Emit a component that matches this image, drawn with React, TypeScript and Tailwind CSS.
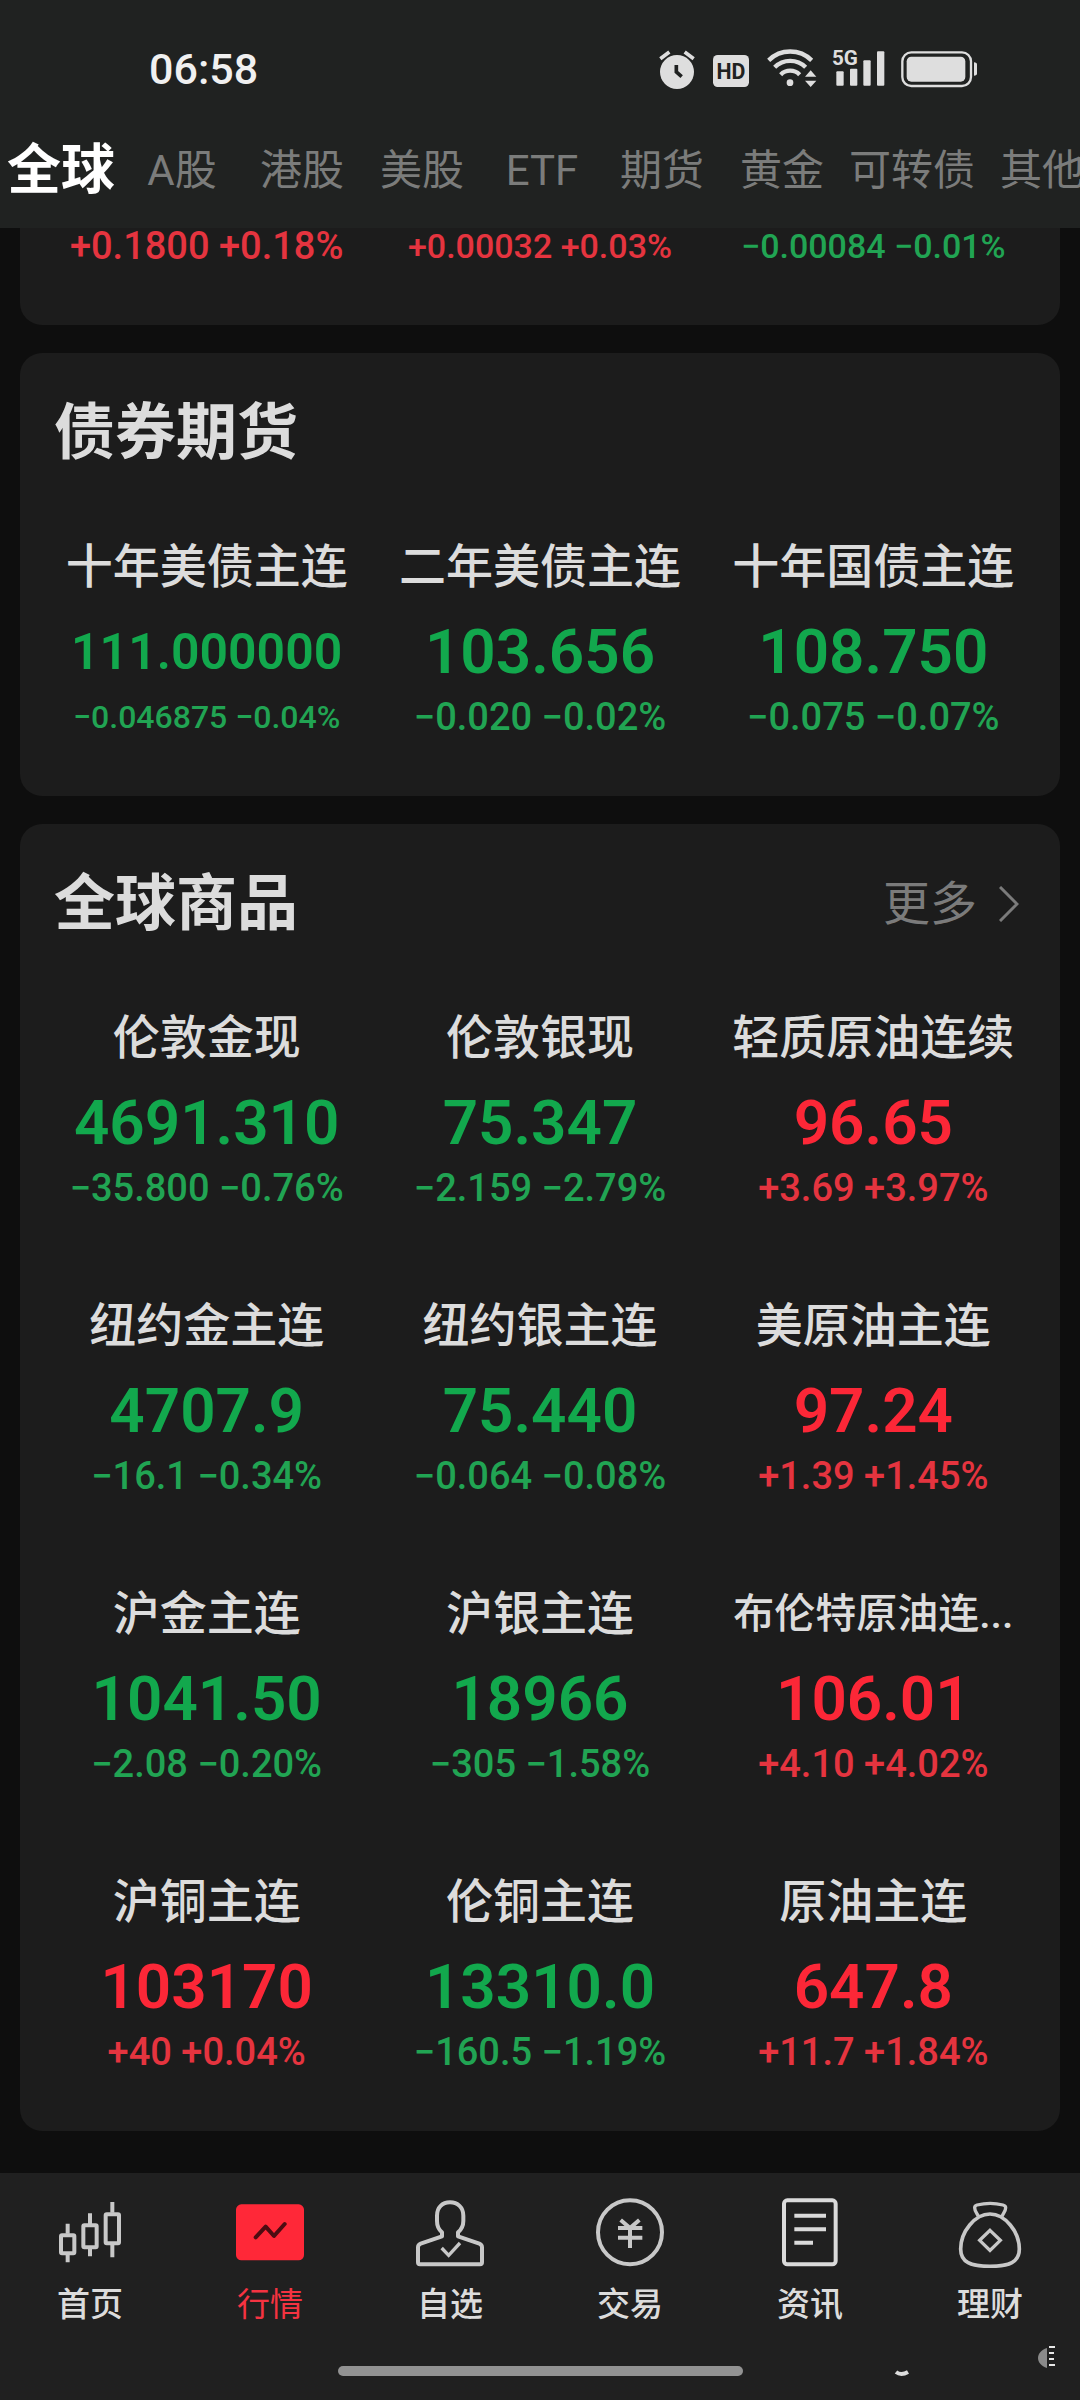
import type { ReactNode } from "react";

type Quote = {
  name: string;
  price: string;
  change: string;
  up?: boolean;
  nameSize?: string;
  priceSize?: string;
  changeSize?: string;
};

const tabs = ["全球", "A股", "港股", "美股", "ETF", "期货", "黄金", "可转债", "其他"];

const forex = [
  { change: "+0.1800 +0.18%", className: "text-[38px] text-[#e5343f]" },
  { change: "+0.00032 +0.03%", className: "text-[34px] text-[#e5343f]" },
  { change: "−0.00084 −0.01%", className: "text-[34px] text-[#21a453]" },
];

const bonds: Quote[] = [
  { name: "十年美债主连", price: "111.000000", change: "−0.046875 −0.04%", priceSize: "text-[50px]", changeSize: "text-[32px]" },
  { name: "二年美债主连", price: "103.656", change: "−0.020 −0.02%" },
  { name: "十年国债主连", price: "108.750", change: "−0.075 −0.07%" },
];

const commodities: Quote[] = [
  { name: "伦敦金现", price: "4691.310", change: "−35.800 −0.76%" },
  { name: "伦敦银现", price: "75.347", change: "−2.159 −2.79%" },
  { name: "轻质原油连续", price: "96.65", change: "+3.69 +3.97%", up: true },
  { name: "纽约金主连", price: "4707.9", change: "−16.1 −0.34%" },
  { name: "纽约银主连", price: "75.440", change: "−0.064 −0.08%" },
  { name: "美原油主连", price: "97.24", change: "+1.39 +1.45%", up: true },
  { name: "沪金主连", price: "1041.50", change: "−2.08 −0.20%" },
  { name: "沪银主连", price: "18966", change: "−305 −1.58%" },
  { name: "布伦特原油连...", price: "106.01", change: "+4.10 +4.02%", up: true, nameSize: "text-[41px]" },
  { name: "沪铜主连", price: "103170", change: "+40 +0.04%", up: true },
  { name: "伦铜主连", price: "13310.0", change: "−160.5 −1.19%" },
  { name: "原油主连", price: "647.8", change: "+11.7 +1.84%", up: true },
];

function StatusIcons() {
  return (
    <div className="flex items-center text-[#dedede]" aria-hidden="true">
      <svg className="mr-[18px] h-10 w-9" viewBox="117 57 108 120" fill="none">
        <circle cx="171" cy="126" r="51" fill="currentColor" />
        <path d="M121 86 148 66M221 86 194 66" stroke="currentColor" strokeWidth="11" />
        <path d="M169 105v21l16 14" stroke="#202221" strokeWidth="11" />
      </svg>
      <svg className="mr-[18px] h-10 w-9" viewBox="279 57 108 120">
        <rect x="279" y="75" width="108" height="96" rx="14" fill="currentColor" />
        <text x="333" y="147" textAnchor="middle" fontFamily="Roboto, sans-serif" fontWeight="700" fontSize="64" fill="#202221">HD</text>
      </svg>
      <svg className="mr-[15px] h-10 w-[50px]" viewBox="441 57 150 120" fill="none">
        <g stroke="currentColor" strokeWidth="13">
          <path d="M446 91a92 92 0 0 1 129 0" />
          <path d="M464 112a66 66 0 0 1 93 0" />
          <path d="M482 134a40 40 0 0 1 57 0" />
        </g>
        <circle cx="510" cy="158" r="10" fill="currentColor" />
        <path d="M555 140h34l-17-19zM555 152h34l-17 19z" fill="currentColor" />
      </svg>
      <svg className="mr-4 h-10 w-[53px] overflow-visible" viewBox="635 57 159 120" fill="currentColor">
        <text x="635" y="106" fontFamily="Roboto, sans-serif" fontWeight="700" fontSize="62">5G</text>
        <rect x="648" y="124" width="22" height="43" rx="3" />
        <rect x="689" y="116" width="22" height="51" rx="3" />
        <rect x="729" y="91" width="22" height="76" rx="3" />
        <rect x="770" y="64" width="22" height="103" rx="3" />
      </svg>
      <svg className="h-10 w-[76px]" viewBox="843 57 228 120" fill="none">
        <rect x="847" y="67" width="206" height="101" rx="27" stroke="currentColor" strokeWidth="7" />
        <rect x="860" y="80" width="176" height="75" rx="14" fill="currentColor" />
        <path d="M1062 97c6 1 9 3 9 6v28c0 3-3 5-9 6z" fill="currentColor" />
      </svg>
    </div>
  );
}

function QuoteCell({ q }: { q: Quote }) {
  return (
    <button type="button" className="flex min-w-0 flex-col items-center whitespace-nowrap">
      <span className={`h-[60px] leading-[60px] font-medium text-[#dcdcdc] ${q.nameSize ?? "text-[47px]"}`}>{q.name}</span>
      <span
        className={`mt-[15px] h-20 leading-[80px] font-semibold ${q.priceSize ?? "text-[62px]"} ${q.up ? "text-[#fc2737]" : "text-[#12a84d]"}`}
      >
        {q.price}
      </span>
      <span
        className={`mt-px h-12 leading-[48px] font-medium ${q.changeSize ?? "text-[38px]"} ${q.up ? "text-[#e5343f]" : "text-[#21a453]"}`}
      >
        {q.change}
      </span>
    </button>
  );
}

function QuoteCard({ title, quotes, more }: { title: string; quotes: Quote[]; more?: boolean }) {
  return (
    <section className="rounded-[22px] bg-[#1c1c1c] px-5 pt-10 pb-[55px]">
      <header className="mb-16 flex h-20 items-center justify-between pr-[21px] pl-[14px]">
        <h2 className="text-[61px] leading-[80px] font-bold text-[#dcdcdc]">{title}</h2>
        {more && (
          <a href="#more" className="flex items-center gap-[22px] text-[47px] leading-[60px] text-[#7b7b7b]">
            更多
            <svg className="h-9 w-5" viewBox="0 0 20 36" fill="none" stroke="currentColor" strokeWidth="3" aria-hidden="true">
              <path d="M1 1 18 18 1 35" />
            </svg>
          </a>
        )}
      </header>
      <div className="grid grid-cols-3 gap-y-[84px]">
        {quotes.map((q) => (
          <QuoteCell key={q.name} q={q} />
        ))}
      </div>
    </section>
  );
}

function NavItem({ label, viewBox, active, children }: { label: string; viewBox: string; active?: boolean; children: ReactNode }) {
  return (
    <a
      href="#nav"
      aria-current={active ? "page" : undefined}
      className={`flex flex-1 flex-col items-center gap-[13px] ${active ? "text-[#f53341]" : "text-[#dcdcdc]"}`}
    >
      <svg className="size-[72px]" viewBox={viewBox} fill="none" stroke="#c8c8c8" strokeWidth="12" aria-hidden="true">
        {children}
      </svg>
      <span className={`text-[33px] leading-[48px] ${active ? "" : "font-medium"}`}>{label}</span>
    </a>
  );
}

export default function App() {
  return (
    <div className="flex min-h-screen flex-col overflow-hidden bg-[#0e0e0e] font-[Roboto,'Noto_Sans_CJK_SC',sans-serif]">
      <header className="bg-[#202221]">
        <div className="flex h-28 items-center justify-between pt-[26px] pr-[103px] pl-[149px]">
          <time className="text-[43px] leading-[48px] font-medium text-[#f0f0f0]">06:58</time>
          <StatusIcons />
        </div>
        <nav className="flex h-[116px] items-center overflow-hidden pt-0.5" aria-label="市场">
          {tabs.map((t, i) => (
            <button
              key={t}
              type="button"
              className={`min-w-[120px] shrink-0 px-[7px] text-center leading-[60px] whitespace-nowrap ${
                i === 0 ? "text-[54px] font-bold text-white" : "text-[42px] text-[#7b7c7b]"
              }`}
            >
              {t}
            </button>
          ))}
        </nav>
      </header>

      <main className="flex flex-1 flex-col gap-7 px-5 pb-[42px]">
        <section className="grid grid-cols-3 rounded-b-[22px] bg-[#1c1c1c] px-5 pb-[61px]">
          {forex.map((f) => (
            <span key={f.change} className={`text-center leading-[36px] font-medium whitespace-nowrap ${f.className}`}>
              {f.change}
            </span>
          ))}
        </section>
        <QuoteCard title="债券期货" quotes={bonds} />
        <QuoteCard title="全球商品" quotes={commodities} more />
      </main>

      <footer className="relative bg-[#202020] pt-[23px] pb-6">
        <nav className="flex" aria-label="主导航">
          <NavItem label="首页" viewBox="162 137 216 216">
            <rect x="183" y="255" width="40" height="54" rx="3" />
            <rect x="250" y="225" width="40" height="66" rx="3" />
            <rect x="317" y="192" width="40" height="87" rx="3" />
            <path d="M203 220v30M203 314v22M270 189v32M270 296v22M337 155v32M337 284v37" />
          </NavItem>
          <NavItem label="行情" viewBox="702 137 216 216" active>
            <rect x="708" y="162" width="204" height="168" rx="16" fill="#ff2838" stroke="none" />
            <path d="M767 261 797 229 822 257 854 221" stroke="#4d0c12" strokeLinecap="round" strokeLinejoin="round" />
          </NavItem>
          <NavItem label="自选" viewBox="72 137 216 216">
            <path
              d="M156 258v-12C145 237 141 225 141 212V196C141 171 157 156 180 156S220 171 220 196V212C220 225 215 237 204 246V258L268 280Q276 283 276 291V336Q276 342 270 342H90Q84 342 84 336V291Q84 283 92 280Z"
              strokeLinejoin="round"
            />
            <path d="M156 258v-12M204 258v-12" />
            <path d="M155 293 176 315 210 278" strokeWidth="10" />
          </NavItem>
          <NavItem label="交易" viewBox="612 137 216 216">
            <circle cx="720" cy="246" r="96" />
            <path d="M692 209 720 233 748 209M684 233h73M684 262h73M720 233v60" />
          </NavItem>
          <NavItem label="资讯" viewBox="132 137 216 216">
            <rect x="162" y="150" width="155" height="192" rx="10" stroke="#dadada" />
            <path d="M193 196h95M193 237h95M193 277h56" stroke="#dadada" />
          </NavItem>
          <NavItem label="理财" viewBox="672 137 216 216">
            <path d="M745 198C740 188 734 182 734 172Q734 166 741 164C765 158 796 158 819 164Q827 166 827 172C827 182 820 188 816 198" strokeWidth="10" />
            <path d="M780 191C825 191 868 244 868 296C868 336 838 348 780 348S692 336 692 296C692 244 735 191 780 191Z" strokeWidth="11" />
            <path d="M780 240 811 270 780 300 749 270Z" strokeWidth="10" />
          </NavItem>
        </nav>
        <div className="mx-auto mt-[37px] h-2.5 w-3/8 rounded-full bg-[#929292]" />
        <svg className="absolute right-6 bottom-5 h-9 w-[164px]" viewBox="0 0 164 36" fill="none" aria-hidden="true">
          <path d="M4 28q5 4 12 0" stroke="#dcdcdc" strokeWidth="4" />
          <path d="M155 4c-12 4-12 16 0 20z" fill="#8a8a8a" />
          <path d="M157 3h6M157 9h5M157 15h5M157 21h6" stroke="#e8e8e8" strokeWidth="2" />
        </svg>
      </footer>
    </div>
  );
}
